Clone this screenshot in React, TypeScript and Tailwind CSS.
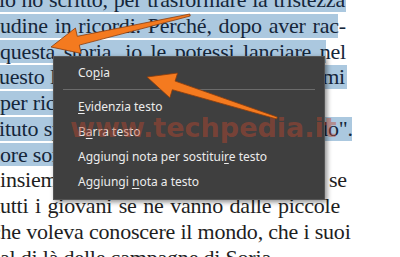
import React from 'react'

interface Line {
  text: string
  hl: number
  justify: boolean
  x: number
}

const lines: Line[] = [
  { text: 'io ho scritto, per trasformare la tristezza', hl: 346, justify: true, x: -1 },
  { text: 'udine in ricordi. Perché, dopo aver rac-', hl: 338, justify: true, x: 0 },
  { text: 'questa storia, io le potessi lanciare nel', hl: 326, justify: true, x: 0 },
  { text: 'uesto libro a chi avrà voglia di leggermi', hl: 347, justify: true, x: -1 },
  { text: 'per ricordare da dove veniamo', hl: 322, justify: false, x: 0 },
  { text: 'ituto spiegare cosa fosse "il mio mondo".', hl: 352, justify: true, x: -1 },
  { text: 'ore sorridendo come un tempo', hl: 300, justify: false, x: 0 },
  { text: 'insieme, come quando ci chiedevamo se', hl: 0, justify: true, x: 0 },
  { text: 'tutti i giovani se ne vanno dalle piccole', hl: 0, justify: true, x: -6 },
  { text: 'che voleva conoscere il mondo, che i suoi', hl: 0, justify: true, x: -9 },
  { text: 'al di là delle campagne di Soria', hl: 0, justify: false, x: 0 }
]

// tapered arrow, tail -> tip
function arrowPoints(tx: number, ty: number, px: number, py: number, head = 28, half = 13, shaft = 4.5, tail = 1) {
  const dx = px - tx
  const dy = py - ty
  const len = Math.hypot(dx, dy)
  const ux = dx / len
  const uy = dy / len
  const nx = -uy
  const ny = ux
  const bx = px - ux * head
  const by = py - uy * head
  const pts = [
    [tx + nx * tail, ty + ny * tail],
    [bx + nx * shaft, by + ny * shaft],
    [bx + nx * half, by + ny * half],
    [px, py],
    [bx - nx * half, by - ny * half],
    [bx - nx * shaft, by - ny * shaft],
    [tx - nx * tail, ty - ny * tail]
  ]
  return pts.map(p => `${p[0].toFixed(1)},${p[1].toFixed(1)}`).join(' ')
}

function MenuItem({ children }: { children: React.ReactNode }) {
  return (
    <div className="h-[25px] flex items-center pl-[24px] text-[#ececec]">
      <span>{children}</span>
    </div>
  )
}

export default function App() {
  return (
    <div className="relative w-[400px] h-[257px] overflow-hidden bg-white">
      <div className="mt-[-12px] font-['Liberation_Serif',serif] text-[22px] tracking-[-0.2px] text-[#1e1e1e]">
        {lines.map((l, i) => (
          <div key={i} className="relative h-[25.75px] pb-[2px]">
            {l.hl > 0 && (
              <div className="absolute left-0 top-0 h-[23.75px] bg-[#abc8df]" style={{ width: l.hl }} />
            )}
            <div
              className={`relative w-[346px] whitespace-nowrap leading-[23.75px] ${
                l.justify ? 'text-justify [text-align-last:justify]' : ''
              } ${l.hl > 0 ? 'text-[#15263a]' : ''}`}
              style={{ marginLeft: l.x }}
            >
              {l.text}
            </div>
          </div>
        ))}
      </div>

      {/* context menu */}
      <div className="absolute left-[53px] top-[56px] w-[272px] h-[144px] bg-[#3f3f3f] border border-[#555] shadow-[2px_2px_5px_rgba(0,0,0,0.45)] pt-[3px] font-['Noto_Sans',sans-serif] text-[12px]">
        <MenuItem>
          Co<u className="underline-offset-2">p</u>ia
        </MenuItem>
        <div className="mx-[9px] my-[4px] h-px bg-[#6b6b6b]" />
        <MenuItem>
          <u className="underline-offset-2">E</u>videnzia testo
        </MenuItem>
        <MenuItem>
          B<u className="underline-offset-2">a</u>rra testo
        </MenuItem>
        <MenuItem>
          Aggiungi nota per sostitui<u className="underline-offset-2">r</u>e testo
        </MenuItem>
        <MenuItem>
          Aggiungi <u className="underline-offset-2">n</u>ota a testo
        </MenuItem>
      </div>

      {/* watermark */}
      <div className="absolute left-[70px] top-[114px] leading-none font-['DejaVu_Sans',sans-serif] font-bold text-[27px] text-[rgba(190,70,45,0.45)]">
        www.techpedia.it
      </div>

      <svg className="absolute inset-0 pointer-events-none" width="400" height="257">
        <polygon
          points={arrowPoints(190, 15, 51, 47)}
          fill="#f47a1f"
          stroke="#8a3c0c"
          strokeWidth="0.8"
          strokeLinejoin="round"
        />
        <polygon
          points={arrowPoints(277, 118, 147, 77)}
          fill="#f47a1f"
          stroke="#8a3c0c"
          strokeWidth="0.8"
          strokeLinejoin="round"
        />
      </svg>
    </div>
  )
}
